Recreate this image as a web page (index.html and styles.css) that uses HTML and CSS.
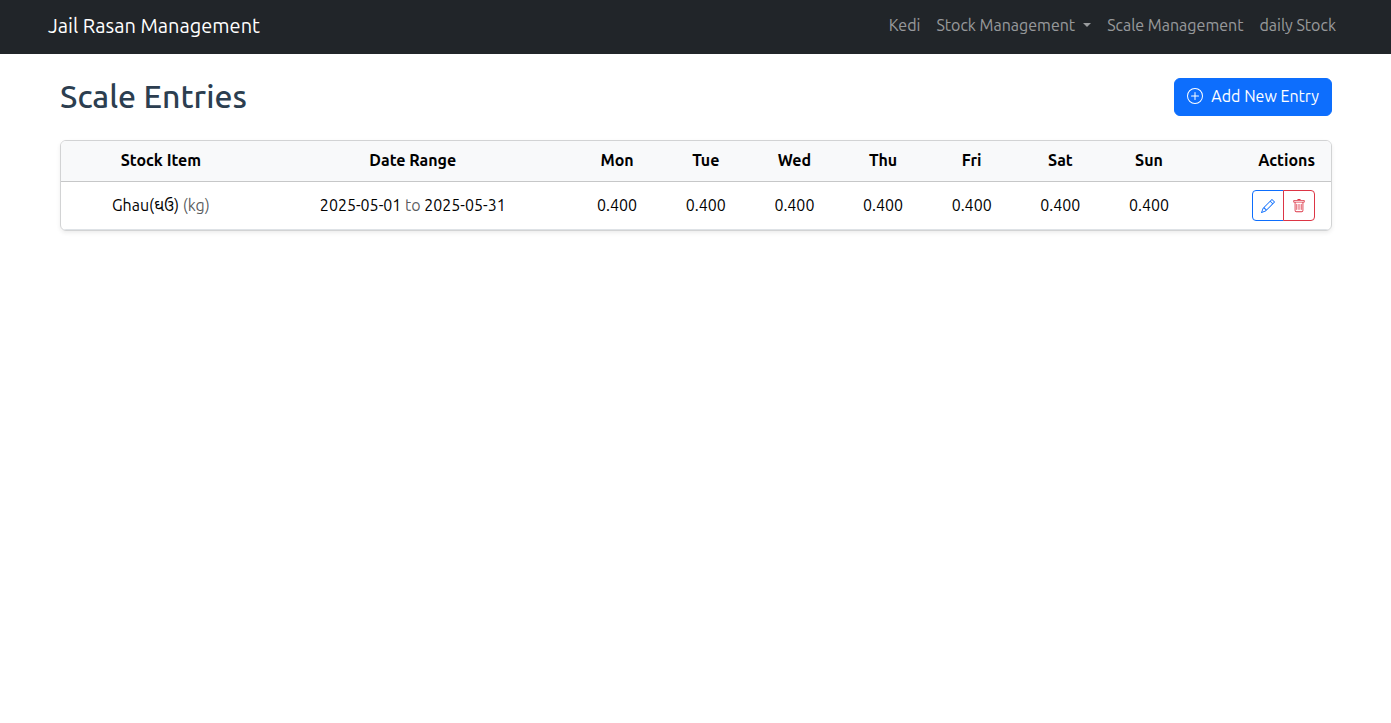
FILE: index.html
```html
<!DOCTYPE html>
<html lang="en">
<head>
<meta charset="utf-8">
<meta name="viewport" content="width=device-width, initial-scale=1">
<title>Jail Rasan Management</title>
<link rel="stylesheet" href="styles.css">
</head>
<body>
<nav class="navbar">
  <a class="brand" href="#">Jail Rasan Management</a>
  <ul class="nav-list">
    <li><a class="nav-link" href="#">Kedi</a></li>
    <li><a class="nav-link dropdown-toggle" href="#">Stock Management</a></li>
    <li><a class="nav-link" href="#">Scale Management</a></li>
    <li><a class="nav-link" href="#">daily Stock</a></li>
  </ul>
</nav>
<main class="container">
  <header class="page-header">
    <h1 class="page-title">Scale Entries</h1>
    <button class="btn btn-primary" type="button">
      <svg class="icon" viewBox="0 0 16 16" fill="currentColor" aria-hidden="true"><path d="M8 15A7 7 0 1 1 8 1a7 7 0 0 1 0 14m0 1A8 8 0 1 0 8 0a8 8 0 0 0 0 16"/><path d="M8 4a.5.5 0 0 1 .5.5v3h3a.5.5 0 0 1 0 1h-3v3a.5.5 0 0 1-1 0v-3h-3a.5.5 0 0 1 0-1h3v-3A.5.5 0 0 1 8 4"/></svg>
      <span>Add New Entry</span>
    </button>
  </header>
  <section class="card">
    <table class="table">
      <colgroup>
        <col class="col-item"><col class="col-range"><col span="7" class="col-day"><col class="col-actions">
      </colgroup>
      <thead>
        <tr><th class="first">Stock Item</th><th>Date Range</th><th>Mon</th><th>Tue</th><th>Wed</th><th>Thu</th><th>Fri</th><th>Sat</th><th>Sun</th><th class="actions">Actions</th></tr>
      </thead>
      <tbody>
        <tr>
          <td class="first">Ghau(<span lang="gu">ઘઉ</span>) <span class="muted">(kg)</span></td>
          <td>2025-05-01 <span class="muted">to</span> 2025-05-31</td>
          <td>0.400</td><td>0.400</td><td>0.400</td><td>0.400</td><td>0.400</td><td>0.400</td><td>0.400</td>
          <td class="actions">
            <div class="btn-group">
              <button class="btn-sm btn-edit" type="button" aria-label="Edit"><svg class="icon-sm" viewBox="0 0 16 16" fill="currentColor" aria-hidden="true"><path d="M12.146.146a.5.5 0 0 1 .708 0l3 3a.5.5 0 0 1 0 .708l-10 10a.5.5 0 0 1-.168.11l-5 2a.5.5 0 0 1-.65-.65l2-5a.5.5 0 0 1 .11-.168zM11.207 2.5 13.5 4.793 14.793 3.5 12.5 1.207zm1.586 3L10.5 3.207 4 9.707V10h.5a.5.5 0 0 1 .5.5v.5h.5a.5.5 0 0 1 .5.5v.5h.293zm-9.761 5.175-.106.106-1.528 3.821 3.821-1.528.106-.106A.5.5 0 0 1 5 12.5V12h-.5a.5.5 0 0 1-.5-.5V11h-.5a.5.5 0 0 1-.468-.325"/></svg></button>
              <button class="btn-sm btn-delete" type="button" aria-label="Delete"><svg class="icon-sm" viewBox="0 0 16 16" fill="currentColor" aria-hidden="true"><path d="M5.5 5.5A.5.5 0 0 1 6 6v6a.5.5 0 0 1-1 0V6a.5.5 0 0 1 .5-.5m2.5 0a.5.5 0 0 1 .5.5v6a.5.5 0 0 1-1 0V6a.5.5 0 0 1 .5-.5m3 .5a.5.5 0 0 0-1 0v6a.5.5 0 0 0 1 0z"/><path d="M14.5 3a1 1 0 0 1-1 1H13v9a2 2 0 0 1-2 2H5a2 2 0 0 1-2-2V4h-.5a1 1 0 0 1-1-1V2a1 1 0 0 1 1-1H6a1 1 0 0 1 1-1h2a1 1 0 0 1 1 1h3.5a1 1 0 0 1 1 1zM4.118 4 4 4.059V13a1 1 0 0 0 1 1h6a1 1 0 0 0 1-1V4.059L11.882 4zM2.5 3h11V2h-11z"/></svg></button>
            </div>
          </td>
        </tr>
      </tbody>
    </table>
  </section>
</main>
</body>
</html>
```

FILE: styles.css
```css
* { box-sizing: border-box; }

body {
  margin: 0;
  background: #fff;
  color: #212529;
  font-family: Ubuntu, "Noto Sans", "Noto Sans Gujarati", sans-serif;
  font-size: 16px;
  line-height: 24px;
}

.navbar {
  display: flex;
  align-items: center;
  justify-content: space-between;
  min-height: 54px;
  padding: 0 47px 4px 48px;
  background: #212529;
}

.brand {
  padding-top: 2px;
  color: #fff;
  font-size: 20px;
  line-height: 30px;
  text-decoration: none;
}

.nav-list {
  display: flex;
  margin: 0;
  padding: 0;
  list-style: none;
}

.nav-link {
  display: block;
  padding: 8px;
  color: rgba(255, 255, 255, 0.55);
  text-decoration: none;
}

.dropdown-toggle::after {
  content: "";
  display: inline-block;
  margin-left: 8px;
  vertical-align: 4px;
  border-top: 4px solid;
  border-right: 4px solid transparent;
  border-left: 4px solid transparent;
}

.container { padding: 24px 59px 24px 60px; }

.page-header {
  display: flex;
  align-items: flex-start;
  justify-content: space-between;
  margin-bottom: 24px;
}

.page-title {
  margin: 0;
  color: #2c3e50;
  font-size: 32px;
  font-weight: 500;
  line-height: 36px;
}

.btn {
  display: flex;
  align-items: center;
  gap: 8px;
  padding: 5px 12px 7px;
  border: 1px solid #0d6efd;
  border-radius: 6px;
  font: inherit;
}

.btn-primary {
  background: #0d6efd;
  color: #fff;
}

.icon {
  width: 16px;
  height: 16px;
}

.card {
  overflow: hidden;
  border: 1px solid #d2d3d4;
  border-radius: 6px;
  box-shadow: 0 2px 4px rgba(0, 0, 0, 0.075);
}

.table {
  width: 100%;
  border-collapse: separate;
  border-spacing: 0;
  table-layout: fixed;
  color: #000;
}

.col-item { width: 15.1%; }
.col-range { width: 25.2%; }
.col-day { width: 6.98%; }

.table th,
.table td {
  padding: 7px 8px 9px;
  border-bottom: 1px solid #dee2e6;
  text-align: center;
  vertical-align: middle;
}

.table th {
  background: #f8f9fa;
  border-bottom-color: #c6c7c8;
  font-weight: 600;
}

.table .first { padding-left: 16px; }

.table .actions {
  padding-right: 16px;
  text-align: right;
}

.table td.actions {
  padding-top: 8px;
  padding-bottom: 8px;
}

.table .muted { color: rgba(33, 37, 41, 0.75); }

.btn-group {
  display: flex;
  justify-content: flex-end;
}

.btn-sm {
  display: flex;
  align-items: center;
  justify-content: center;
  width: 32px;
  height: 31px;
  padding: 0;
  border: 1px solid;
  background: #fff;
}

.btn-edit {
  border-radius: 4px 0 0 4px;
  color: #0d6efd;
}

.btn-delete {
  margin-left: -1px;
  border-radius: 0 4px 4px 0;
  color: #dc3545;
}

.icon-sm {
  width: 14px;
  height: 14px;
}
```
